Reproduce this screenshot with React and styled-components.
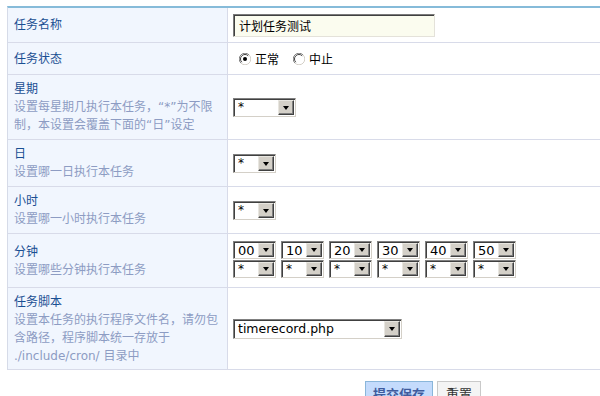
import React from "react";
import styled, { createGlobalStyle } from "styled-components";

const Global = createGlobalStyle`
  html, body { margin: 0; padding: 0; background: #fff; overflow: hidden; }
  body { font-family: "DejaVu Sans", "Noto Sans CJK SC", sans-serif; font-size: 12px; }
`;

const Page = styled.div`
  padding: 6px 0 0 7px;
`;

const Table = styled.div`
  width: 593px;
  border-top: 2px solid #86bbd9;
  border-left: 1px solid #d6dbe8;
`;

const Row = styled.div`
  display: grid;
  grid-template-columns: 220px 1fr;
  height: ${(p) => p.$h}px;
  border-bottom: 1px solid #d8dbe9;
`;

const LabelCell = styled.div`
  background: #f1f6fe;
  border-right: 1px solid #d8dbe9;
  padding: 0 5px 0 6px;
  display: flex;
  flex-direction: column;
  justify-content: center;
  line-height: 18px;
`;

const Label = styled.div`
  color: #1a4f93;
  font-size: 12px;
  white-space: nowrap;
`;

const Desc = styled.div`
  color: #8d9cc3;
  font-size: 12px;
  white-space: nowrap;
`;

const ValueCell = styled.div`
  padding: 0 5px;
  display: flex;
  align-items: center;
`;

const TextInput = styled.div`
  width: 202px;
  height: 23px;
  box-sizing: border-box;
  background: #fbfcef;
  border: 1px solid;
  border-color: #7a7a7a #e4e2da #e4e2da #7a7a7a;
  box-shadow: inset 1px 1px 0 #404040;
  padding-left: 5px;
  display: flex;
  align-items: center;
  font-size: 12px;
  color: #000;
`;

const RadioGroup = styled.div`
  display: flex;
  align-items: center;
  gap: 14px;
  padding-left: 6px;
`;

const RadioLabel = styled.label`
  display: flex;
  align-items: center;
  gap: 4px;
  color: #000;
  font-size: 12px;
`;

const SelectBox = styled.div`
  width: ${(p) => p.$w}px;
  height: ${(p) => p.$h || 19}px;
  box-sizing: border-box;
  display: flex;
  background: #fff;
  border: 1px solid;
  border-color: #808080 #d4d0c8 #d4d0c8 #808080;
  box-shadow: inset 1px 1px 0 #404040;
  padding: 1px 1px 1px 1px;
`;

const SelectValue = styled.div`
  flex: 1;
  padding-left: 3px;
  font-size: ${(p) => p.$fs || 12}px;
  line-height: 15px;
  color: #000;
  overflow: hidden;
  white-space: nowrap;
`;

const ArrowBtn = styled.div`
  width: 16px;
  box-sizing: border-box;
  background: #d4d0c8;
  border: 1px solid;
  border-color: #e8e6e0 #404040 #404040 #e8e6e0;
  box-shadow: inset -1px -1px 0 #808080;
  display: flex;
  align-items: center;
  justify-content: center;
  &::after {
    content: "";
    width: 0;
    height: 0;
    border-left: 3.5px solid transparent;
    border-right: 3.5px solid transparent;
    border-top: 4px solid #000;
    margin-top: 1px;
  }
`;

const MinuteGrid = styled.div`
  display: grid;
  grid-template-columns: repeat(6, 43px);
  column-gap: 5px;
  row-gap: 1px;
  margin-top: -3px;
`;

const Footer = styled.div`
  display: flex;
  gap: 4px;
  padding-left: 358px;
  margin-top: 11px;
`;

const Button = styled.div`
  height: 24px;
  box-sizing: border-box;
  padding: 0 ${(p) => (p.$primary ? 7 : 8)}px;
  display: flex;
  align-items: center;
  font-size: 13px;
  font-weight: ${(p) => (p.$primary ? "bold" : "normal")};
  color: ${(p) => (p.$primary ? "#3f5c9e" : "#333")};
  background: ${(p) => (p.$primary ? "#c4dbfc" : "#f4f4f4")};
  border: 1px solid ${(p) => (p.$primary ? "#8ab6da" : "#c9c9c9")};
`;

function Radio({ checked }) {
  return (
    <svg width="12" height="12" viewBox="0 0 12 12">
      <circle cx="6" cy="6" r="5.5" fill="#fff" />
      <path d="M1.9 10.1 A5.5 5.5 0 0 1 10.1 1.9" stroke="#808080" fill="none" strokeWidth="1" />
      <path d="M10.1 1.9 A5.5 5.5 0 0 1 1.9 10.1" stroke="#d4d0c8" fill="none" strokeWidth="1" />
      <path d="M2.8 9.2 A4.5 4.5 0 0 1 9.2 2.8" stroke="#404040" fill="none" strokeWidth="1" />
      {checked && <circle cx="6" cy="6" r="2" fill="#000" />}
    </svg>
  );
}

function Select({ w, h, value, fs }) {
  return (
    <SelectBox $w={w} $h={h}>
      <SelectValue $fs={fs}>{value}</SelectValue>
      <ArrowBtn />
    </SelectBox>
  );
}

const minutes = ["00", "10", "20", "30", "40", "50"];

export default function App() {
  return (
    <Page>
      <Global />
      <Table>
        <Row $h={34}>
          <LabelCell>
            <Label>任务名称</Label>
          </LabelCell>
          <ValueCell>
            <TextInput>计划任务测试</TextInput>
          </ValueCell>
        </Row>
        <Row $h={31}>
          <LabelCell>
            <Label>任务状态</Label>
          </LabelCell>
          <ValueCell>
            <RadioGroup>
              <RadioLabel>
                <Radio checked />
                正常
              </RadioLabel>
              <RadioLabel>
                <Radio />
                中止
              </RadioLabel>
            </RadioGroup>
          </ValueCell>
        </Row>
        <Row $h={64}>
          <LabelCell>
            <Label>星期</Label>
            <Desc>设置每星期几执行本任务，“*”为不限</Desc>
            <Desc>制，本设置会覆盖下面的“日”设定</Desc>
          </LabelCell>
          <ValueCell>
            <Select w={63} value="*" />
          </ValueCell>
        </Row>
        <Row $h={46}>
          <LabelCell>
            <Label>日</Label>
            <Desc>设置哪一日执行本任务</Desc>
          </LabelCell>
          <ValueCell>
            <Select w={43} value="*" />
          </ValueCell>
        </Row>
        <Row $h={46}>
          <LabelCell>
            <Label>小时</Label>
            <Desc>设置哪一小时执行本任务</Desc>
          </LabelCell>
          <ValueCell>
            <Select w={43} value="*" />
          </ValueCell>
        </Row>
        <Row $h={53}>
          <LabelCell>
            <Label>分钟</Label>
            <Desc>设置哪些分钟执行本任务</Desc>
          </LabelCell>
          <ValueCell>
            <MinuteGrid>
              {minutes.map((m) => (
                <Select key={m} w={43} h={18} value={m} fs={13} />
              ))}
              {minutes.map((m) => (
                <Select key={"s" + m} w={43} h={18} value="*" />
              ))}
            </MinuteGrid>
          </ValueCell>
        </Row>
        <Row $h={81}>
          <LabelCell>
            <Label>任务脚本</Label>
            <Desc>设置本任务的执行程序文件名，请勿包</Desc>
            <Desc>含路径，程序脚本统一存放于</Desc>
            <Desc>./include/cron/ 目录中</Desc>
          </LabelCell>
          <ValueCell>
            <Select w={169} h={20} value="timerecord.php" fs={12.5} />
          </ValueCell>
        </Row>
      </Table>
      <Footer>
        <Button $primary>提交保存</Button>
        <Button>重置</Button>
      </Footer>
    </Page>
  );
}
